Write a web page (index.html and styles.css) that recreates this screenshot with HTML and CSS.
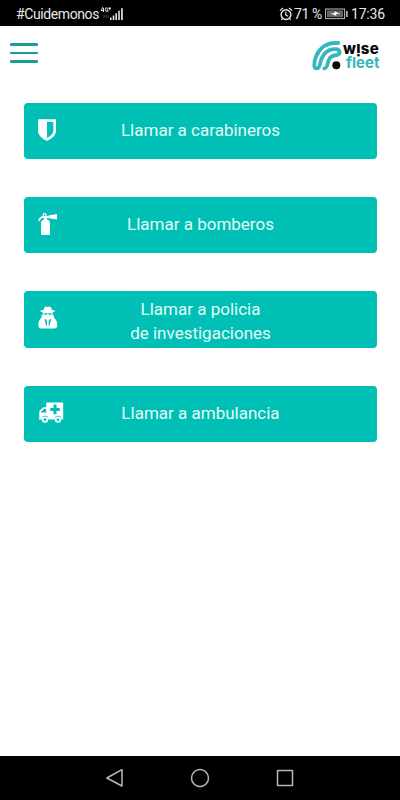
FILE: index.html
```html
<!DOCTYPE html>
<html lang="es">
<head>
<meta charset="utf-8">
<title>Wise Fleet</title>
<link rel="stylesheet" href="styles.css">
</head>
<body>
<div class="screen">
  <div class="status">
    <span class="carrier">#Cuidemonos</span>
    <svg class="signal" width="25" height="16" viewBox="0 0 25 16">
      <g fill="none" stroke="#e5e5e5" stroke-width="1"><path d="M3 1L1 4.500H4M3.500 2V6M8 2.200Q5.200 1 5.200 3.500Q5.200 6 8 5.200V3.800H7M8.500 2.400H11M9.800 1V4"/></g>
      <path d="M4 9v3M6 9v3M8 9v3" stroke="#444"/>
      <path d="M10 11.500h1.600V14H10zM12.700 9.500h1.600V14h-1.600zM15.400 7.200H17V14h-1.600zM18.200 4.800h1.600V14h-1.600zM21.100 2.200h1.700V14h-1.700z" fill="#e5e5e5"/>
    </svg>
    <svg class="alarm" width="14" height="14" viewBox="0 0 14 14" fill="none" stroke="#e8e8e8" stroke-width="1.400"><circle cx="7" cy="7.600" r="4.900"/><path d="M.9 3.600L4 1M13.100 3.600L10 1M6.800 4.800v3.100l2.200 1.300M3.600 11.400l-1.300 1.500M10.400 11.400l1.300 1.500" stroke-width="1.200"/></svg>
    <span class="percent">71 %</span>
    <svg class="battery" width="24" height="12" viewBox="0 0 24 12"><rect x=".6" y="1" width="19" height="9.600" fill="none" stroke="#bdbdbd"/><path d="M2 2.400h16v6.800H2z" fill="#666"/><path d="M5.500 5.300h4V3.200l5.700 2.700h-4v2.200z" fill="#fff"/><path d="M21.200 3h1.400v6h-1.400z" fill="#ddd"/></svg>
    <span class="time">17:36</span>
  </div>

  <header class="header">
    <div class="menu"><i></i><i></i><i></i></div>
    <div class="logo">
      <svg width="30" height="31" viewBox="0 0 30 31" fill="none">
        <path d="M26.300 3C15 2.300 8 7.800 4.400 15.600C3 18.500 2.300 21.800 2.300 25.500C2.300 29 6 29.300 7.200 26.500C8.300 24 8.400 20.800 10 17.700C13 11.300 18 8.500 24.500 9.200C28.300 9.800 28.600 14.500 24.800 15C19.500 15.300 17.300 17.500 16.300 21.200C15.500 24 15.200 28.200 12.300 28.300" stroke="#36b7bd" stroke-width="3.800" stroke-linecap="round" stroke-linejoin="round"/>
        <circle cx="24.300" cy="25.200" r="4" fill="#050505"/>
      </svg>
      <div class="words"><span class="wise">w<span class="turned">i</span>se</span><span class="fleet">fleet</span></div>
    </div>
  </header>

  <main class="calls">
    <div class="call">
      <svg class="icon" width="18" height="22" viewBox="256 128 1280 1536" fill="#fff"><path d="M1344 960v-640h-448v1137q119-63 213-137 235-184 235-360zm192-768v768q0 86-33.500 170.500t-83 150-118 127.500-126.500 103-121 77.500-89.500 49.500-42.500 20q-12 6-26 6t-26-6q-16-7-42.500-20t-89.500-49.500-121-77.500-126.500-103-118-127.500-83-150-33.500-170.500v-768q0-26 19-45t45-19h1152q26 0 45 19t19 45z"/></svg>
      <span class="label">Llamar a carabineros</span>
    </div>
    <div class="call">
      <svg class="icon" width="20" height="23" viewBox="0 0 20 23"><path d="M3 9.800Q3 7.300 6 6.500V4H9v2.500Q12 7.300 12 9.800V21q0 1-1 1H4q-1 0-1-1V9.800z" fill="#fff"/><path d="M1 7.500Q2.300 4.200 5 3.900H11" stroke="#fff" stroke-width="1.600" fill="none" stroke-linecap="round"/><circle cx="6.600" cy="2.200" r="1.500" stroke="#fff" stroke-width="1.200" fill="none"/><path d="M10.500 2.400L19 1.100V6.400L10.500 5.200z" fill="#fff"/></svg>
      <span class="label">Llamar a bomberos</span>
    </div>
    <div class="call">
      <svg class="icon agent" width="20" height="23" viewBox="0 0 20 23"><path d="M2 4.900Q4 4.200 5.500 4Q6 1 7.500.5Q8.400.4 9.600 1Q11 .4 12 .5Q13.400 1 14 4Q15.700 4.200 17.600 5Q16 6 14.700 6.200V8.200L14 9.300H16L15.800 11.500Q19.200 14 19.200 19Q19.200 22.500 16.200 22.500H3.300Q.3 22.500.3 19Q.3 14 3.700 11.500L3.300 9.300H5.500L4.700 8.200V6.200Q3.200 6 2 4.900z" fill="#fff"/><path d="M5.800 7.200h3.500l.5.400.5-.4h3.500q0 1.500-1.800 1.500-1.300 0-1.700-.8h-1Q8.800 8.700 7.500 8.700q-1.700 0-1.700-1.500zM6.500 12.800l2.300 1.200L9 19l-.8 1.600zM13.100 12.800l-2.300 1.200L10.600 19l.8 1.600z" fill="#00bfb5"/></svg>
      <span class="label double">Llamar a policia<br>de investigaciones</span>
    </div>
    <div class="call">
      <svg class="icon ambulance" width="26" height="21" viewBox="0 0 26 21"><path d="M9 .5h15.500q.7 0 .7.700V17.500H23a3.200 3.200 0 0 1-6 0H10a3.200 3.200 0 0 1-6 0H1.200q-.7 0-.7-.7.8 0 .8-1V10Q1.300 9 2 8.300L4.500 5.800Q5 5.300 6 5.300H8.200V1.200Q8.200.5 9 .5z" fill="#fff"/><g fill="#00bfb5"><path d="M6 7h2.200v3.500H3V9.800zM15.500 2.600h3V6h3.300v3h-3.300v3.300h-3V9h-3.300V6h3.300z"/><circle cx="7" cy="17" r="3.200"/><circle cx="20" cy="17" r="3.200"/></g><g stroke="#fff" stroke-width="1.800" fill="#00bfb5"><circle cx="7" cy="17.600" r="2.300"/><circle cx="20" cy="17.600" r="2.300"/></g></svg>
      <span class="label">Llamar a ambulancia</span>
    </div>
  </main>

  <nav class="nav">
    <svg width="20" height="20" viewBox="0 0 20 20"><path d="M17 1.700V18L1.800 10z"/></svg>
    <svg width="20" height="20" viewBox="0 0 20 20"><circle cx="10" cy="10" r="8.500"/></svg>
    <svg width="20" height="20" viewBox="0 0 20 20"><path d="M2.500 2.500h15v15h-15z"/></svg>
  </nav>
</div>
</body>
</html>
```
FILE: styles.css
```css
* { box-sizing: border-box; }
body { margin: 0; background: #fff; font-family: Roboto, "Liberation Sans", sans-serif; }
.screen { width: 400px; height: 800px; display: flex; flex-direction: column; }
svg { display: block; flex: none; }

.status { height: 26px; flex: none; background: #000; color: #e8e8e8; display: flex; align-items: center; padding: 2px 15px 0 16px; font-size: 14px; line-height: 24px; white-space: nowrap; }
.carrier { width: 83px; letter-spacing: -.4px; }
.signal { margin-left: 1px; }
.alarm { margin-left: auto; }
.percent { width: 29px; margin-left: 1px; letter-spacing: -.4px; }
.battery { margin-left: 2px; }
.time { width: 34px; margin-left: 2px; letter-spacing: -.2px; }

.header { height: 76px; flex: none; display: flex; justify-content: space-between; padding: 14px 20px 0 10px; }
.menu { display: flex; flex-direction: column; gap: 6px; padding-top: 3px; }
.menu i { width: 28px; height: 2.500px; border-radius: 1px; background: #159f94; }
.logo { display: flex; }
.words { display: flex; flex-direction: column; width: 38px; padding-top: 2px; font-family: Inter, sans-serif; font-size: 15px; line-height: 13px; white-space: nowrap; }
.wise { height: 14px; color: #050505; font-weight: 800; padding-left: 1px; letter-spacing: .3px; }
.turned { display: inline-block; transform: translateY(1px) rotate(180deg); }
.fleet { color: #36b7bd; font-weight: 700; padding-left: 4px; }

.calls { flex: 1; display: flex; flex-direction: column; gap: 37.900px; padding: .5px 23px 0 24px; }
.call { position: relative; height: 56.500px; flex: none; display: flex; align-items: center; justify-content: center; border-radius: 4px; background: #00bfb5; color: #e2fbf8; font-size: 17px; line-height: 24px; text-align: center; }
.label { padding-bottom: 2px; }
.double { padding: 3px 0 0; }
.icon { position: absolute; left: 14px; top: 16px; }
.agent { top: 15px; }

.nav { height: 44px; flex: none; background: #000; display: flex; justify-content: center; align-items: center; gap: 65px; }
.nav svg { fill: none; stroke: #b8b8b8; stroke-width: 1.500; stroke-linejoin: round; }
```
